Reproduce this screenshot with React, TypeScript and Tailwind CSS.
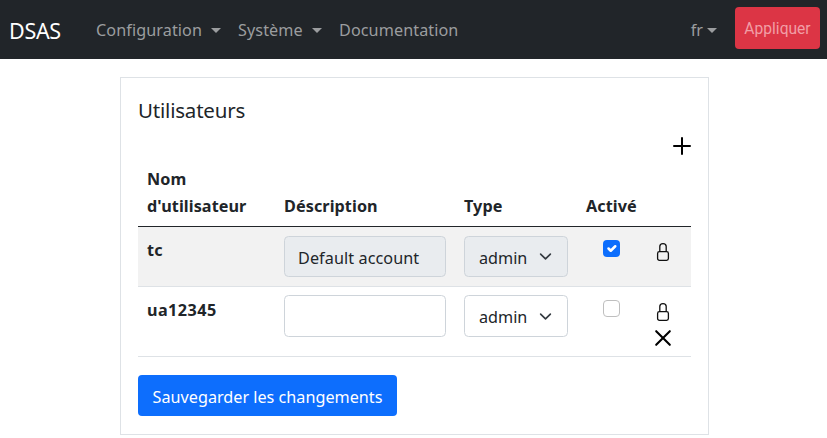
import React from "react";

function Caret() {
  return (
    <svg width="10" height="5" viewBox="0 0 10 5" className="block fill-current">
      <path d="M0 0H10L5 5Z" />
    </svg>
  );
}

function Lock() {
  return (
    <svg width="14" height="20" viewBox="0 0 14 20" fill="none" stroke="#111" strokeWidth="1.3" className="block">
      <rect x="1.6" y="9.6" width="10.8" height="8.8" rx="1.8" />
      <path d="M3.8 9.6V4.6C3.8 2.6 5.2 1.6 7 1.6S10.2 2.6 10.2 4.6V9.6" />
    </svg>
  );
}

function Cross() {
  return (
    <svg width="18" height="18" viewBox="0 0 18 18" fill="none" stroke="#000" strokeWidth="2.1" strokeLinecap="round" className="block">
      <path d="M2.2 2.2L15.8 15.8M15.8 2.2L2.2 15.8" />
    </svg>
  );
}

function Plus() {
  return (
    <svg width="18" height="18" viewBox="0 0 18 18" fill="none" stroke="#000" strokeWidth="2" strokeLinecap="round" className="block">
      <path d="M9 1V17M1 9H17" />
    </svg>
  );
}

function Check({ on }: { on: boolean }) {
  return on ? (
    <span className="flex h-[17px] w-[17px] items-center justify-center rounded-[4px] bg-[#0d6efd]">
      <svg width="15" height="15" viewBox="0 0 20 20" fill="none" stroke="#fff" strokeWidth="3.4" strokeLinecap="round" strokeLinejoin="round">
        <path d="M6 10l3 3 6-6" />
      </svg>
    </span>
  ) : (
    <span className="block h-[17px] w-[17px] rounded-[4px] border border-[#bfbfbf] bg-white" />
  );
}

function Row({ name, description, locked }: { name: string; description: string; locked: boolean }) {
  const field = locked ? "bg-[#e9ecef]" : "bg-white";
  return (
    <div
      className={
        "grid grid-cols-[146px_180px_122px_69px_36px] border-b border-[#dee2e6] " +
        (locked ? "h-[60px] bg-[#f2f2f2]" : "h-[70px]")
      }
    >
      <div className={"pt-[10px] pl-[9px] font-bold " + (locked ? "tracking-[0.1px]" : "tracking-[0.45px]")}>{name}</div>
      <div className={locked ? "pt-[9px]" : "pt-[8px]"}>
        <div className={"flex w-[162px] items-center rounded-[4.5px] border border-[#ced4da] pt-[3px] pl-[13px] tracking-[0.08px] " + field + (locked ? " h-[41px]" : " h-[42px]")}>
          {description}
        </div>
      </div>
      <div className={locked ? "pt-[9px]" : "pt-[8px]"}>
        <div className={"flex w-[104px] items-center justify-between rounded-[4.5px] border border-[#ced4da] pr-[15px] pl-[14px] " + field + (locked ? " h-[41px]" : " h-[42px]")}>
          <span className={locked ? "pt-[3px]" : "pt-[2px]"}>admin</span>
          <svg width="13" height="13" viewBox="0 0 16 16" fill="none" stroke="#343a40" strokeWidth="2" strokeLinecap="round" strokeLinejoin="round">
            <path d="M2 5l6 6 6-6" />
          </svg>
        </div>
      </div>
      <div className="pt-[13px] pl-[17px]">
        <Check on={locked} />
      </div>
      <div className={"flex flex-col items-center gap-[7px] pr-[20px] " + (locked ? "pt-[15px]" : "pt-[15px]")}>
        <Lock />
        {!locked && <Cross />}
      </div>
    </div>
  );
}

export default function App() {
  return (
    <div className="h-[438px] overflow-hidden bg-white font-['Noto_Sans',sans-serif] text-[16.2px] leading-[27px] text-[#212529]">
      <nav className="flex h-[59px] items-center bg-[#212529] text-[#9b9d9f]">
        <span className="w-[87px] pt-[2px] pl-[9px] text-[21.5px] tracking-[-0.3px] text-white">DSAS</span>
        <span className="flex w-[142px] items-center gap-[9px] pt-[1px] pl-[9px] tracking-[0.08px]">Configuration <Caret /></span>
        <span className="flex w-[101px] items-center gap-[9px] pt-[1px] pl-[9px] tracking-[0.08px]">Système <Caret /></span>
        <span className="pt-[1px] pl-[9px] tracking-[0.08px]">Documentation</span>
        <span className="ml-auto flex items-center gap-[4px] pt-[1px] pr-[18px]">fr <Caret /></span>
        <button className="mr-[7px] mb-[3px] h-[42px] w-[85px] rounded-[4px] bg-[#dc3545] pt-[2px] font-['Roboto',sans-serif] text-[15.6px] text-[#f19ea6]">Appliquer</button>
      </nav>
      <main className="mt-[18px] ml-[120px] h-[358px] w-[589px] border border-[#dee2e6] px-[17px] pt-[18px]">
        <h1 className="text-[20.5px] leading-[28px] tracking-[-0.2px]">Utilisateurs</h1>
        <div className="mt-[13px] flex justify-end"><Plus /></div>
        <div className="mt-[10px] grid h-[62px] grid-cols-[146px_180px_122px_105px] items-end border-b border-[#212529] pb-[6px] font-bold tracking-[0.08px]">
          <div className="pl-[9px]">Nom<br />d'utilisateur</div>
          <div>Déscription</div>
          <div>Type</div>
          <div>Activé</div>
        </div>
        <Row name="tc" description="Default account" locked />
        <Row name="ua12345" description="" locked={false} />
        <button className="mt-[18px] block h-[41px] w-[259px] rounded-[4px] bg-[#0d6efd] pt-[4px] text-white">
          Sauvegarder les changements
        </button>
      </main>
    </div>
  );
}
